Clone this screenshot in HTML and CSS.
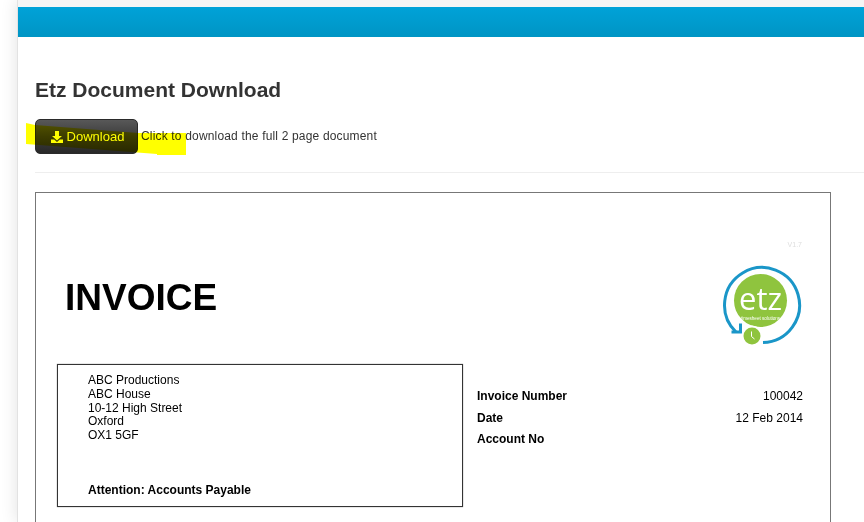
FILE: index.html
```html
<!DOCTYPE html>
<html lang="en">
<head>
<meta charset="utf-8">
<title>Etz Document Download</title>
<link rel="stylesheet" href="styles.css">
</head>
<body>
<div class="shell">
  <div class="topbar"></div>
  <main class="content">
    <h1 class="title">Etz Document Download</h1>
    <div class="action-row">
      <a class="btn" href="#">
        <svg class="btn-icon" viewBox="0 0 12 12" width="12" height="12" aria-hidden="true"><path fill="currentColor" d="M4 0h4v5h3L6 9.500 1 5h3zM0 8.500h3.200L6 11l2.800-2.500H12V12H0z"/></svg>
        Download
      </a>
      <span class="hint">Click to download the full 2 page document</span>
    </div>
    <hr class="rule">
    <article class="doc">
      <div class="version">V1.7</div>
      <div class="doc-head">
        <div class="invoice-title">INVOICE</div>
        <svg class="logo" viewBox="0 0 80 82" width="80" height="82" aria-hidden="true">
          <path d="M14 67A37.500 37.500 0 1 1 41 77.500" fill="none" stroke="#1a96c8" stroke-width="3"/>
          <path d="M9.500 67H18.500V58.500" fill="none" stroke="#1a96c8" stroke-width="3"/>
          <circle cx="38.500" cy="35.500" r="26.500" fill="#8fc43e"/>
          <circle cx="30" cy="71" r="10.500" fill="#fff"/>
          <circle cx="30" cy="71" r="8.500" fill="#8fc43e"/>
          <path d="M29.500 66.500v5l3 2.500" fill="none" stroke="#fff" stroke-width="1"/>
          <text x="38.500" y="45" class="logo-word">etz</text>
          <text x="38.500" y="55" class="logo-sub">timesheet solutions</text>
        </svg>
      </div>
      <div class="doc-meta">
        <div class="address">
          <div>ABC Productions</div>
          <div>ABC House</div>
          <div>10-12 High Street</div>
          <div>Oxford</div>
          <div>OX1 5GF</div>
          <div class="attention">Attention: Accounts Payable</div>
        </div>
        <dl class="facts">
          <div class="fact"><dt>Invoice Number</dt><dd>100042</dd></div>
          <div class="fact"><dt>Date</dt><dd>12 Feb 2014</dd></div>
          <div class="fact"><dt>Account No</dt><dd></dd></div>
        </dl>
      </div>
    </article>
  </main>
</div>
<svg class="marker" width="864" height="522" aria-hidden="true"><polygon points="26,123 35,125 138,133 186,133 186,155 157,155 157,154 26,144" fill="#ffff00"/></svg>
</body>
</html>
```
FILE: styles.css
```css
html, body { margin: 0; padding: 0; height: 100%; }
body {
  background: #fff;
  font-family: "Liberation Sans", Arial, sans-serif;
  overflow: hidden;
  position: relative;
}
.shell {
  margin-left: 17px;
  border-left: 1px solid #e2e2e2;
  padding-top: 7px;
  height: 515px;
  overflow: hidden;
  background: #f5f5f5;
  box-shadow: 0 0 16px rgba(0, 0, 0, 0.12);
}
.topbar {
  height: 30px;
  background: linear-gradient(#00a2d8, #0095c4);
}
.content {
  background: #fff;
  padding: 41px 0 0 17px;
  height: 444px;
  overflow: hidden;
}
.title {
  margin: 0;
  font-size: 21px;
  line-height: 24px;
  font-weight: 700;
  color: #333;
}
.action-row {
  display: flex;
  align-items: center;
  gap: 3px;
  margin-top: 17px;
}
.btn {
  box-sizing: border-box;
  width: 103px;
  height: 35px;
  padding-left: 2px;
  display: flex;
  align-items: center;
  justify-content: center;
  gap: 4px;
  border: 1px solid #2a2a2a;
  border-radius: 5px;
  background: linear-gradient(#585858, #3c3c3c 50%, #282828);
  color: #fff;
  font-size: 13px;
  text-decoration: none;
}
.btn-icon { flex: none; }
.hint {
  font-size: 12px;
  letter-spacing: 0.17px;
  color: #333;
  position: relative;
  top: -1px;
}
.rule {
  margin: 18px 0 19px;
  border: 0;
  border-top: 1px solid #eee;
}
.doc {
  box-sizing: border-box;
  width: 796px;
  height: 400px;
  border: 1px solid #777;
  padding: 48px 27px 0 21px;
  position: relative;
  color: #000;
}
.version {
  text-align: right;
  font-size: 7px;
  line-height: 8px;
  color: #ddd;
  margin-right: 1px;
}
.doc-head {
  display: flex;
  justify-content: space-between;
  align-items: flex-start;
  margin-top: 16px;
}
.invoice-title {
  margin: 11px 0 0 8px;
  font-size: 37px;
  line-height: 44px;
  font-weight: 700;
}
.logo { margin-right: 1px; }
.logo-word {
  font-family: "Open Sans", "Liberation Sans", sans-serif;
  font-size: 31px;
  fill: #fff;
  text-anchor: middle;
}
.logo-sub {
  font-size: 4.600px;
  fill: #fff;
  text-anchor: middle;
}
.doc-meta {
  display: flex;
  margin-top: 17px;
}
.address {
  box-sizing: border-box;
  width: 406px;
  height: 143px;
  flex: none;
  border: 1px solid #333;
  box-shadow: 0 0 1px #777;
  padding: 9px 0 0 30px;
  font-size: 12px;
  line-height: 13.800px;
}
.attention {
  margin-top: 41px;
  font-weight: 700;
}
.facts {
  flex: 1;
  margin: 24px 0 0 14px;
  font-size: 12px;
}
.fact {
  display: flex;
  justify-content: space-between;
  height: 21.500px;
  line-height: 16px;
}
.fact dt { font-weight: 700; }
.fact dd { margin: 0; }
.marker {
  position: absolute;
  left: 0;
  top: 0;
  mix-blend-mode: multiply;
  pointer-events: none;
}
```
